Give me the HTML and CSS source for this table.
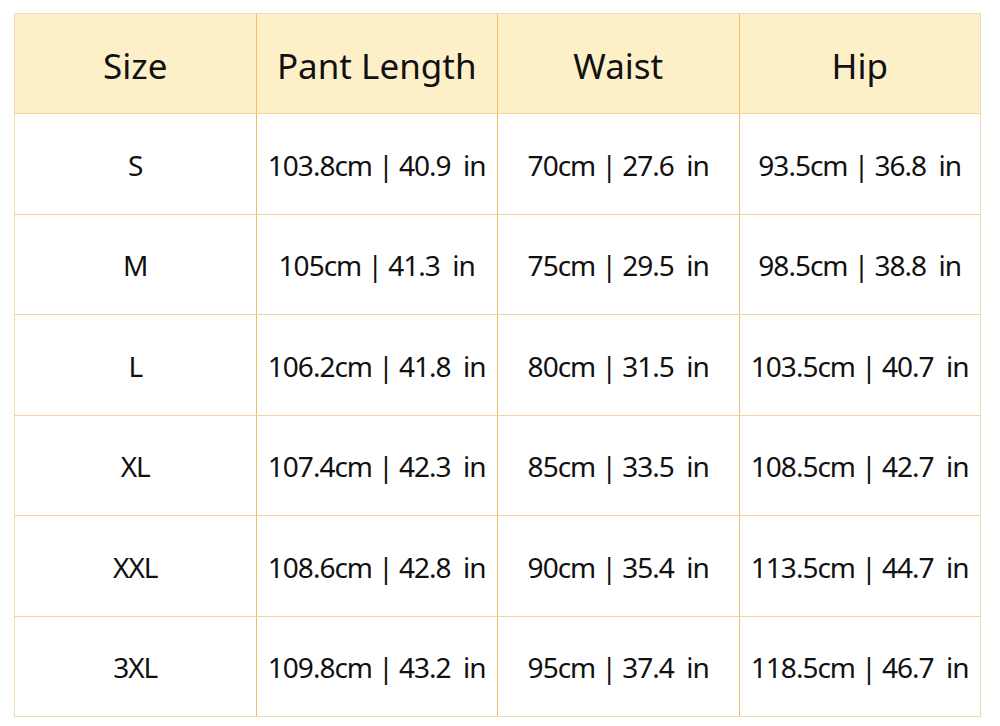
FILE: index.html
```html
<!DOCTYPE html>
<html>
<head>
<meta charset="utf-8">
<link rel="stylesheet" href="styles.css">
</head>
<body>
<table class="size-table">
  <thead>
    <tr><th>Size</th><th>Pant Length</th><th>Waist</th><th>Hip</th></tr>
  </thead>
  <tbody>
    <tr><td>S</td><td>103.8cm | 40.9&nbsp; in</td><td>70cm | 27.6&nbsp; in</td><td>93.5cm | 36.8&nbsp; in</td></tr>
    <tr><td>M</td><td>105cm | 41.3&nbsp; in</td><td>75cm | 29.5&nbsp; in</td><td>98.5cm | 38.8&nbsp; in</td></tr>
    <tr><td>L</td><td>106.2cm | 41.8&nbsp; in</td><td>80cm | 31.5&nbsp; in</td><td>103.5cm | 40.7&nbsp; in</td></tr>
    <tr><td>XL</td><td>107.4cm | 42.3&nbsp; in</td><td>85cm | 33.5&nbsp; in</td><td>108.5cm | 42.7&nbsp; in</td></tr>
    <tr><td>XXL</td><td>108.6cm | 42.8&nbsp; in</td><td>90cm | 35.4&nbsp; in</td><td>113.5cm | 44.7&nbsp; in</td></tr>
    <tr><td>3XL</td><td>109.8cm | 43.2&nbsp; in</td><td>95cm | 37.4&nbsp; in</td><td>118.5cm | 46.7&nbsp; in</td></tr>
  </tbody>
</table>
</body>
</html>
```
FILE: styles.css
```css
html, body {
  margin: 0;
  padding: 0;
  background: #ffffff;
}
body {
  padding: 13px 0 0 14px;
}
.size-table {
  width: 967px;
  table-layout: fixed;
  border-collapse: collapse;
  border: 1px solid #eedab6;
  font-family: "Noto Sans", "Open Sans", sans-serif;
  color: #111111;
}
.size-table th,
.size-table td {
  border-top: 1px solid #f5d49c;
  border-bottom: 1px solid #f5d49c;
  text-align: center;
  vertical-align: middle;
  padding: 0;
}
.size-table th + th,
.size-table td + td {
  border-left: 1px solid #f0bc68;
}
.size-table thead th {
  border-top: 1px solid #eedab6;
}
.size-table tbody tr:last-child td {
  border-bottom: 1px solid #eedab6;
}
.size-table th {
  height: 95px;
  padding-top: 4px;
  background: #fdf0c9;
  font-weight: 400;
  font-size: 35px;
}
.size-table td {
  height: 97.5px;
  padding-top: 2px;
  font-size: 28px;
  letter-spacing: -1px;
}
```
